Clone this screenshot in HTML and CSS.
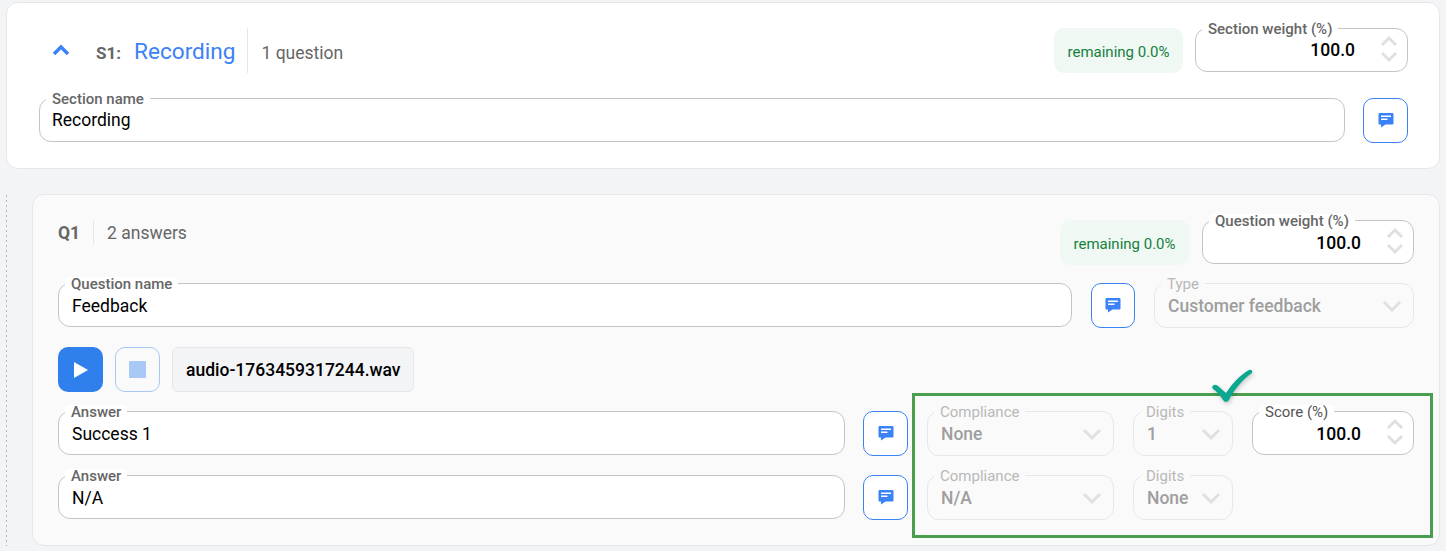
FILE: index.html
```html
<!DOCTYPE html>
<html lang="en">
<head>
<meta charset="utf-8">
<title>Recording</title>
<link rel="stylesheet" href="styles.css">
</head>
<body>
<section class="card section-card">
  <div class="head-row">
    <div class="title-group">
      <svg class="collapse" width="18" height="12" viewBox="0 0 18 12"><path d="M2 10 9 3l7 7" fill="none" stroke="#3b82f6" stroke-width="3.4"/></svg>
      <span class="s-code">S1:</span>
      <span class="s-name">Recording</span>
      <span class="vr vr-tall"></span>
      <span class="count">1 question</span>
    </div>
    <div class="head-right">
      <div class="pill">remaining 0.0%</div>
      <div class="field num w-213">
        <span class="label">Section weight (%)</span>
        <span class="value">100.0</span>
        <svg class="spin" width="18" height="28" viewBox="0 0 18 28"><path d="M2 10l7-7 7 7M2 18l7 7 7-7" fill="none" stroke="#e0e0e0" stroke-width="3"/></svg>
      </div>
    </div>
  </div>
  <div class="row section-name-row">
    <div class="field grow">
      <span class="label">Section name</span>
      <span class="text">Recording</span>
    </div>
    <button class="note" type="button"><svg width="16" height="16" viewBox="0 0 16 16"><path d="M1.500 1h13a1 1 0 0 1 1 1v9.500a1 1 0 0 1-1 1H7.500L3 15.500V12.500H1.500a1 1 0 0 1-1-1V2a1 1 0 0 1 1-1Z" fill="#3b82f6"/><path d="M3 4.200h10M3 7.200h6.500" stroke="#fff" stroke-width="1.400"/></svg></button>
  </div>
</section>

<div class="question-wrap">
  <section class="card question-card">
    <div class="head-row q-head">
      <div class="title-group q-title">
        <span class="q-code">Q1</span>
        <span class="vr vr-short"></span>
        <span class="count">2 answers</span>
      </div>
      <div class="head-right">
        <div class="pill">remaining 0.0%</div>
        <div class="field num on-grey w-212">
          <span class="label">Question weight (%)</span>
          <span class="value">100.0</span>
          <svg class="spin" width="18" height="28" viewBox="0 0 18 28"><path d="M2 10l7-7 7 7M2 18l7 7 7-7" fill="none" stroke="#e0e0e0" stroke-width="3"/></svg>
        </div>
      </div>
    </div>

    <div class="row q-name-row">
      <div class="field on-grey grow">
        <span class="label">Question name</span>
        <span class="text">Feedback</span>
      </div>
      <button class="note narrow" type="button"><svg width="16" height="16" viewBox="0 0 16 16"><path d="M1.500 1h13a1 1 0 0 1 1 1v9.500a1 1 0 0 1-1 1H7.500L3 15.500V12.500H1.500a1 1 0 0 1-1-1V2a1 1 0 0 1 1-1Z" fill="#3b82f6"/><path d="M3 4.200h10M3 7.200h6.500" stroke="#fff" stroke-width="1.400"/></svg></button>
      <div class="field select disabled w-260">
        <span class="label">Type</span>
        <span class="sel-value">Customer feedback</span>
        <svg class="chev" width="20" height="12" viewBox="0 0 20 12"><path d="M2 2l8 8 8-8" fill="none" stroke="#e0e0e0" stroke-width="3"/></svg>
      </div>
    </div>

    <div class="player">
      <button class="play" type="button"><svg width="14" height="16" viewBox="0 0 14 16"><path d="M0 0 14 8 0 16Z" fill="#fff"/></svg></button>
      <button class="stop" type="button"><span class="stop-square"></span></button>
      <div class="file">audio-1763459317244.wav</div>
    </div>

    <div class="row answer-row">
      <div class="field on-grey grow">
        <span class="label">Answer</span>
        <span class="text">Success 1</span>
      </div>
      <button class="note" type="button"><svg width="16" height="16" viewBox="0 0 16 16"><path d="M1.500 1h13a1 1 0 0 1 1 1v9.500a1 1 0 0 1-1 1H7.500L3 15.500V12.500H1.500a1 1 0 0 1-1-1V2a1 1 0 0 1 1-1Z" fill="#3b82f6"/><path d="M3 4.200h10M3 7.200h6.500" stroke="#fff" stroke-width="1.400"/></svg></button>
      <div class="field select disabled w-187">
        <span class="label">Compliance</span>
        <span class="sel-value">None</span>
        <svg class="chev" width="20" height="12" viewBox="0 0 20 12"><path d="M2 2l8 8 8-8" fill="none" stroke="#e0e0e0" stroke-width="3"/></svg>
      </div>
      <div class="field select disabled w-100">
        <span class="label">Digits</span>
        <span class="sel-value">1</span>
        <svg class="chev" width="20" height="12" viewBox="0 0 20 12"><path d="M2 2l8 8 8-8" fill="none" stroke="#e0e0e0" stroke-width="3"/></svg>
      </div>
      <div class="field num on-grey w-162">
        <span class="label dark">Score (%)</span>
        <span class="value plain">100.0</span>
        <svg class="spin" width="18" height="28" viewBox="0 0 18 28"><path d="M2 10l7-7 7 7M2 18l7 7 7-7" fill="none" stroke="#e0e0e0" stroke-width="3"/></svg>
      </div>
    </div>

    <div class="row answer-row second">
      <div class="field on-grey grow">
        <span class="label">Answer</span>
        <span class="text">N/A</span>
      </div>
      <button class="note" type="button"><svg width="16" height="16" viewBox="0 0 16 16"><path d="M1.500 1h13a1 1 0 0 1 1 1v9.500a1 1 0 0 1-1 1H7.500L3 15.500V12.500H1.500a1 1 0 0 1-1-1V2a1 1 0 0 1 1-1Z" fill="#3b82f6"/><path d="M3 4.200h10M3 7.200h6.500" stroke="#fff" stroke-width="1.400"/></svg></button>
      <div class="field select disabled w-187">
        <span class="label">Compliance</span>
        <span class="sel-value">N/A</span>
        <svg class="chev" width="20" height="12" viewBox="0 0 20 12"><path d="M2 2l8 8 8-8" fill="none" stroke="#e0e0e0" stroke-width="3"/></svg>
      </div>
      <div class="field select disabled w-100">
        <span class="label">Digits</span>
        <span class="sel-value">None</span>
        <svg class="chev" width="20" height="12" viewBox="0 0 20 12"><path d="M2 2l8 8 8-8" fill="none" stroke="#e0e0e0" stroke-width="3"/></svg>
      </div>
      <div class="spacer-162"></div>
    </div>
  </section>
</div>

<div class="highlight"></div>
<svg class="tick" width="46" height="38" viewBox="0 0 46 38"><path d="M1 20Q3 16 7 19L15 26C21 17 29 8 38 3Q42 2 41 6C31 13 23 23 18 33Q15 37 12 33C9 28 5 24 2 22Z" fill="#0ba88f"/></svg>
</body>
</html>
```
FILE: styles.css
```css
* { box-sizing: border-box; }

html, body { height: 551px; overflow: hidden; }

body {
  position: relative;
  margin: 0;
  padding: 2px 6px 0;
  background: #f3f4f6;
  font-family: Roboto, "Liberation Sans", sans-serif;
  color: #000;
}

.card {
  border: 1px solid #e5e7eb;
  border-radius: 12px;
}

.section-card {
  height: 167px;
  padding: 25px 31px 0 32px;
  background: #fff;
}

.head-row {
  display: flex;
  justify-content: space-between;
  align-items: flex-start;
}

.title-group {
  display: flex;
  align-items: center;
  height: 45px;
}

.collapse { margin: 0 26px 0 13px; position: relative; top: -1px; }

.s-code {
  margin-right: 13px;
  font-size: 17px;
  font-weight: 700;
  color: #666;
  position: relative;
  top: 2px;
}

.s-name {
  font-size: 22.600px;
  color: #3b82f6;
  position: relative;
  top: 1px;
}

.vr { display: block; width: 1px; background: #e5e7eb; }
.vr-tall { height: 45px; margin: 0 13px 0 12px; }
.vr-short { height: 25px; margin: 0 13px 0 13px; }

.count { font-size: 17.500px; color: #666; position: relative; top: 2px; }

.q-title .count { top: 0; }

.head-right { display: flex; gap: 12px; align-items: flex-start; }

.pill {
  display: flex;
  align-items: center;
  justify-content: center;
  width: 129px;
  height: 45px;
  padding-top: 3px;
  border-radius: 10px;
  background: #eff8f3;
  color: #15803d;
  font-size: 15px;
}

.row { display: flex; align-items: flex-start; }

.section-name-row { gap: 18px; margin-top: 25px; }

.grow { flex: 1; min-width: 0; }

.field {
  position: relative;
  display: flex;
  align-items: center;
  height: 44px;
  padding: 0 13px;
  border: 1px solid #c4c4c4;
  border-radius: 12px;
  background: #fff;
}

.label {
  position: absolute;
  top: -7px;
  left: 6px;
  padding: 0 6px;
  height: 14px;
  line-height: 14px;
  font-size: 15px;
  font-weight: 500;
  color: #666;
  background: #fff;
  border-radius: 4px;
  white-space: nowrap;
}

.label.dark { color: #555; font-weight: 400; }

.text { font-size: 17.500px; position: relative; top: 0; }

.section-card .text { margin-left: -1px; }
.question-card .text { top: 1px; }

.num { justify-content: flex-end; padding-right: 52px; }

.value { font-size: 17.500px; font-weight: 500; position: relative; top: 0; }
.question-card .value { top: 1px; }

.spin { position: absolute; right: 9px; top: 6px; }

.w-213 { width: 213px; }
.w-212 { width: 212px; }
.w-260 { width: 260px; }
.w-187 { width: 187px; }
.w-162 { width: 162px; }
.w-100 { width: 100px; }
.spacer-162 { width: 162px; flex: none; }

.note {
  flex: none;
  display: flex;
  align-items: center;
  justify-content: center;
  width: 45px;
  height: 45px;
  padding: 0 0 2px;
  border: 1px solid #3b82f6;
  border-radius: 10px;
  background: #fff;
}

.note.narrow { width: 44px; }

.question-wrap {
  margin: 25px 0 0 -6px;
  padding: 0 0 0 32px;
  background-image: linear-gradient(#b4b4b4 40%, transparent 40%);
  background-size: 1px 5px;
  background-repeat: repeat-y;
  background-position: 6px 1px;
}

.question-card {
  height: 352px;
  padding: 25px 25px 0 25px;
  background: #fafafa;
}

.q-head { height: 63px; }

.q-title { height: 25px; }

.q-code { font-size: 17.500px; font-weight: 700; color: #666; }

.q-head .head-right { gap: 13px; }

.on-grey .label { background: #fff; }

.q-name-row { gap: 19px; }

.disabled {
  border-color: #e5e7eb;
  background: #fafafa;
  height: 45px;
}

.disabled .label {
  color: #b8b8b8;
  font-weight: 400;
  background: #fafafa;
}

.sel-value {
  font-size: 17.500px;
  font-weight: 500;
  color: #9e9e9e;
  position: relative;
  top: 0;
}

.chev { position: absolute; right: 11px; top: 16px; }

.player {
  display: flex;
  gap: 12px;
  margin-top: 19px;
}

.play, .stop {
  display: flex;
  align-items: center;
  justify-content: center;
  width: 45px;
  height: 45px;
  padding: 0;
  border-radius: 10px;
}

.play { border: 0; background: #2f80ed; }

.stop { border: 1px solid #a9c8f5; background: #fafafa; }

.stop-square {
  display: block;
  width: 17px;
  height: 17px;
  border-radius: 1px;
  background: #a8c9f6;
}

.file {
  display: flex;
  align-items: center;
  height: 45px;
  width: 242px;
  padding: 0 13px;
  border: 1px solid #e5e7eb;
  border-radius: 6px;
  background: #f3f4f6;
  font-size: 17.500px;
  font-weight: 500;
  white-space: nowrap;
}

.answer-row { gap: 19px; margin-top: 19px; }
.answer-row > .note { margin-left: -1px; }

.highlight {
  position: absolute;
  left: 912px;
  top: 393px;
  width: 521px;
  height: 145px;
  border: 3px solid #4a9f4f;
  pointer-events: none;
}

.tick {
  position: absolute;
  left: 1211px;
  top: 367px;
  filter: drop-shadow(1px 2px 2px rgba(0, 0, 0, 0.2));
}
```
